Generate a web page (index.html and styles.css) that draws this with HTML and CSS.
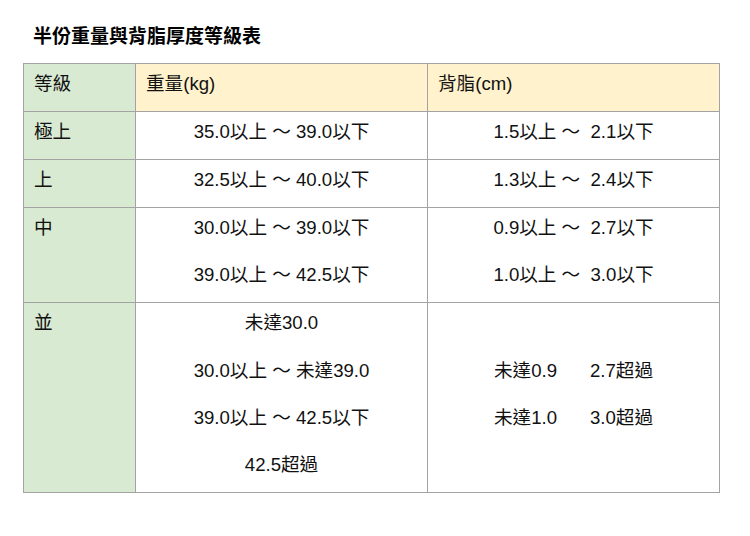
FILE: index.html
```html
<!DOCTYPE html>
<html lang="zh-Hant">
<head>
<meta charset="utf-8">
<title>半份重量與背脂厚度等級表</title>
<link rel="stylesheet" href="styles.css">
</head>
<body>
<h1 class="title">半份重量與背脂厚度等級表</h1>
<table class="grade">
  <colgroup>
    <col class="c-grade">
    <col class="c-weight">
    <col class="c-fat">
  </colgroup>
  <tr class="head">
    <td class="g"><div class="ln left">等級</div></td>
    <td><div class="ln left">重量(kg)</div></td>
    <td><div class="ln left">背脂(cm)</div></td>
  </tr>
  <tr>
    <td class="g"><div class="ln left">極上</div></td>
    <td><div class="ln">35.0以上 ～ 39.0以下</div></td>
    <td><div class="ln">1.5以上 ～&nbsp; 2.1以下</div></td>
  </tr>
  <tr>
    <td class="g"><div class="ln left">上</div></td>
    <td><div class="ln">32.5以上 ～ 40.0以下</div></td>
    <td><div class="ln">1.3以上 ～&nbsp; 2.4以下</div></td>
  </tr>
  <tr>
    <td class="g"><div class="ln left">中</div></td>
    <td>
      <div class="ln">30.0以上 ～ 39.0以下</div>
      <div class="ln">39.0以上 ～ 42.5以下</div>
    </td>
    <td>
      <div class="ln">0.9以上 ～&nbsp; 2.7以下</div>
      <div class="ln">1.0以上 ～&nbsp; 3.0以下</div>
    </td>
  </tr>
  <tr>
    <td class="g"><div class="ln left">並</div></td>
    <td>
      <div class="ln">未達30.0</div>
      <div class="ln">30.0以上 ～ 未達39.0</div>
      <div class="ln">39.0以上 ～ 42.5以下</div>
      <div class="ln">42.5超過</div>
    </td>
    <td class="mid">
      <div class="ln"><span class="pair"><span>未達0.9</span><span>2.7超過</span></span></div>
      <div class="ln"><span class="pair"><span>未達1.0</span><span>3.0超過</span></span></div>
    </td>
  </tr>
</table>
</body>
</html>
```
FILE: styles.css
```css
html, body {
  margin: 0;
  padding: 0;
  background: #ffffff;
}
body {
  padding: 25px 0 0 23px;
  font-family: "Liberation Sans", Arial, "Noto Sans CJK TC", sans-serif;
  color: #111111;
}
.title {
  margin: 0 0 15px 10px;
  font-size: 19px;
  line-height: 23px;
  font-weight: bold;
  font-family: "Liberation Sans", Arial, "Noto Sans CJK TC", sans-serif;
  color: #000;
}
.grade {
  border-collapse: collapse;
  table-layout: fixed;
  width: 697px;
  font-size: 18.6px;
}
.c-grade { width: 112px; }
.c-weight { width: 292px; }
.c-fat { width: 292px; }
.grade td {
  border: 1px solid #a3a3a3;
  padding: 0;
  vertical-align: top;
  background: #ffffff;
}
.grade td.g {
  background: #d9ead3;
}
.grade tr.head td {
  background: #fff2cc;
}
.grade tr.head td.g {
  background: #d9ead3;
}
.grade td.mid {
  vertical-align: middle;
}
.ln {
  box-sizing: border-box;
  height: 47.1px;
  padding-top: 9px;
  line-height: 22px;
  text-align: center;
  white-space: nowrap;
}
.ln.left {
  text-align: left;
  padding-left: 10px;
}
.pair {
  display: inline-flex;
  gap: 33px;
}
```
